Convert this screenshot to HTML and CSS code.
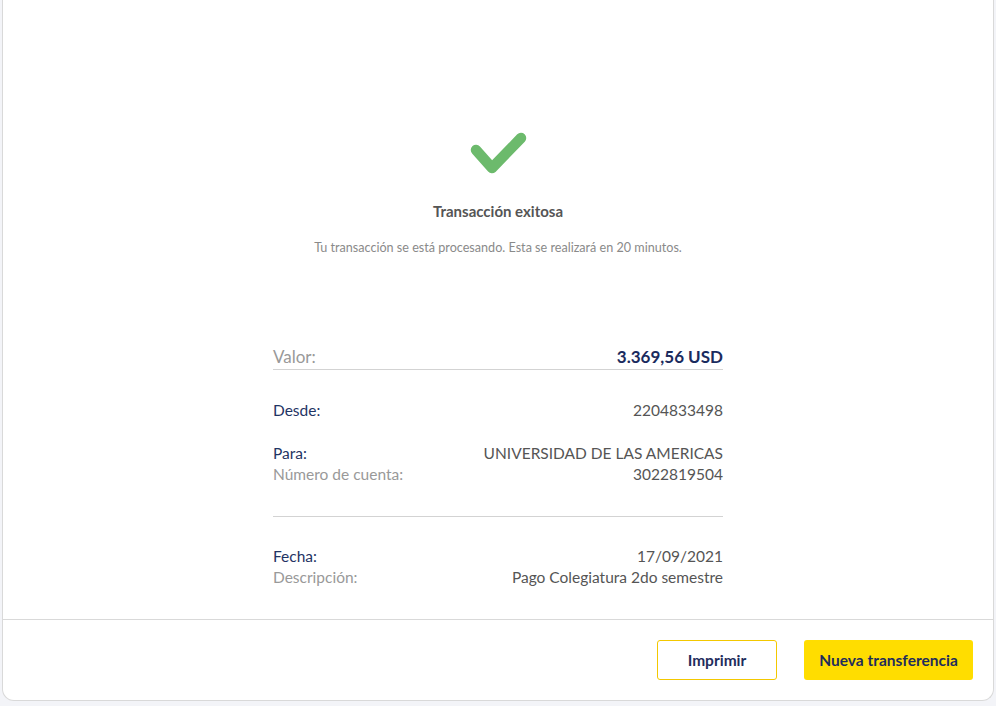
FILE: index.html
```html
<!DOCTYPE html>
<html lang="es">
<head>
    <meta charset="UTF-8">
    <meta name="viewport" content="width=device-width, initial-scale=1.0">
    <title>Transacción exitosa</title>
    <link rel="stylesheet" href="styles.css">
</head>
<body>
    <div class="card">
        <div class="card-body">
            <div class="status">
                <svg class="check" width="60" height="48" viewBox="0 0 60 48">
                    <path d="M8 22 L24 40 L53 10" fill="none" stroke="#6cba6c" stroke-width="10.5" stroke-linecap="round" stroke-linejoin="round"/>
                </svg>
                <h1 class="title">Transacción exitosa</h1>
                <p class="subtitle">Tu transacción se está procesando. Esta se realizará en 20 minutos.</p>
            </div>

            <div class="details">
                <div class="row amount">
                    <span class="label muted">Valor:</span>
                    <span class="value strong">3.369,56 USD</span>
                </div>

                <div class="group">
                    <div class="row">
                        <span class="label">Desde:</span>
                        <span class="value">2204833498</span>
                    </div>
                </div>

                <div class="group bordered">
                    <div class="row">
                        <span class="label">Para:</span>
                        <span class="value">UNIVERSIDAD DE LAS AMERICAS</span>
                    </div>
                    <div class="row">
                        <span class="label muted">Número de cuenta:</span>
                        <span class="value">3022819504</span>
                    </div>
                </div>

                <div class="group last">
                    <div class="row">
                        <span class="label">Fecha:</span>
                        <span class="value">17/09/2021</span>
                    </div>
                    <div class="row">
                        <span class="label muted">Descripción:</span>
                        <span class="value">Pago Colegiatura 2do semestre</span>
                    </div>
                </div>
            </div>
        </div>

        <div class="card-footer">
            <button class="btn btn-outline">Imprimir</button>
            <button class="btn btn-primary">Nueva transferencia</button>
        </div>
    </div>
</body>
</html>
```

FILE: styles.css
```css
body{
    margin:0;
    padding:0;
    background-color:#f3f4f8;
    font-family:Lato, "Open Sans", sans-serif;
}
.card{
    margin:0 2px 4px 2px;
    background:#fff;
    border:1px solid #d9d9d9;
    border-top:none;
    border-radius:0 0 12px 12px;
}
.card-body{
    padding-top:128px;
    padding-bottom:31px;
}
.status{
    text-align:center;
}
.check{
    display:block;
    margin:0 auto;
}
.title{
    margin:27px 0 0 0;
    font-size:15px;
    line-height:17px;
    font-weight:700;
    color:#555;
}
.subtitle{
    margin:20px 0 0 0;
    font-size:12.6px;
    line-height:15px;
    color:#8a8a8a;
}
.details{
    width:450px;
    margin:91px auto 0 auto;
}
.row{
    display:flex;
    justify-content:space-between;
    font-size:15.5px;
    line-height:21px;
}
.label{
    color:#1f3464;
}
.label.muted{
    color:#999;
}
.value{
    color:#555;
}
.amount{
    font-size:17px;
    line-height:22px;
    padding-bottom:1px;
    border-bottom:1px solid #d3d3d3;
}
.value.strong{
    color:#1a2b5e;
    font-weight:700;
}
.group{
    padding-top:30px;
}
.group.bordered{
    padding-top:22px;
    padding-bottom:31px;
    border-bottom:1px solid #d3d3d3;
}
.group.last{
    padding-top:29px;
}
.card-footer{
    display:flex;
    justify-content:flex-end;
    gap:27px;
    padding:20px 20px 20px 0;
    border-top:1px solid #d9d9d9;
}
.btn{
    height:40px;
    border-radius:3px;
    font-family:Lato, sans-serif;
    font-size:15.5px;
    font-weight:700;
    color:#1f2d5c;
    cursor:pointer;
}
.btn-outline{
    width:120px;
    background:#fff;
    border:1px solid #f3c800;
}
.btn-primary{
    width:169px;
    background:#ffdd00;
    border:none;
}
```
